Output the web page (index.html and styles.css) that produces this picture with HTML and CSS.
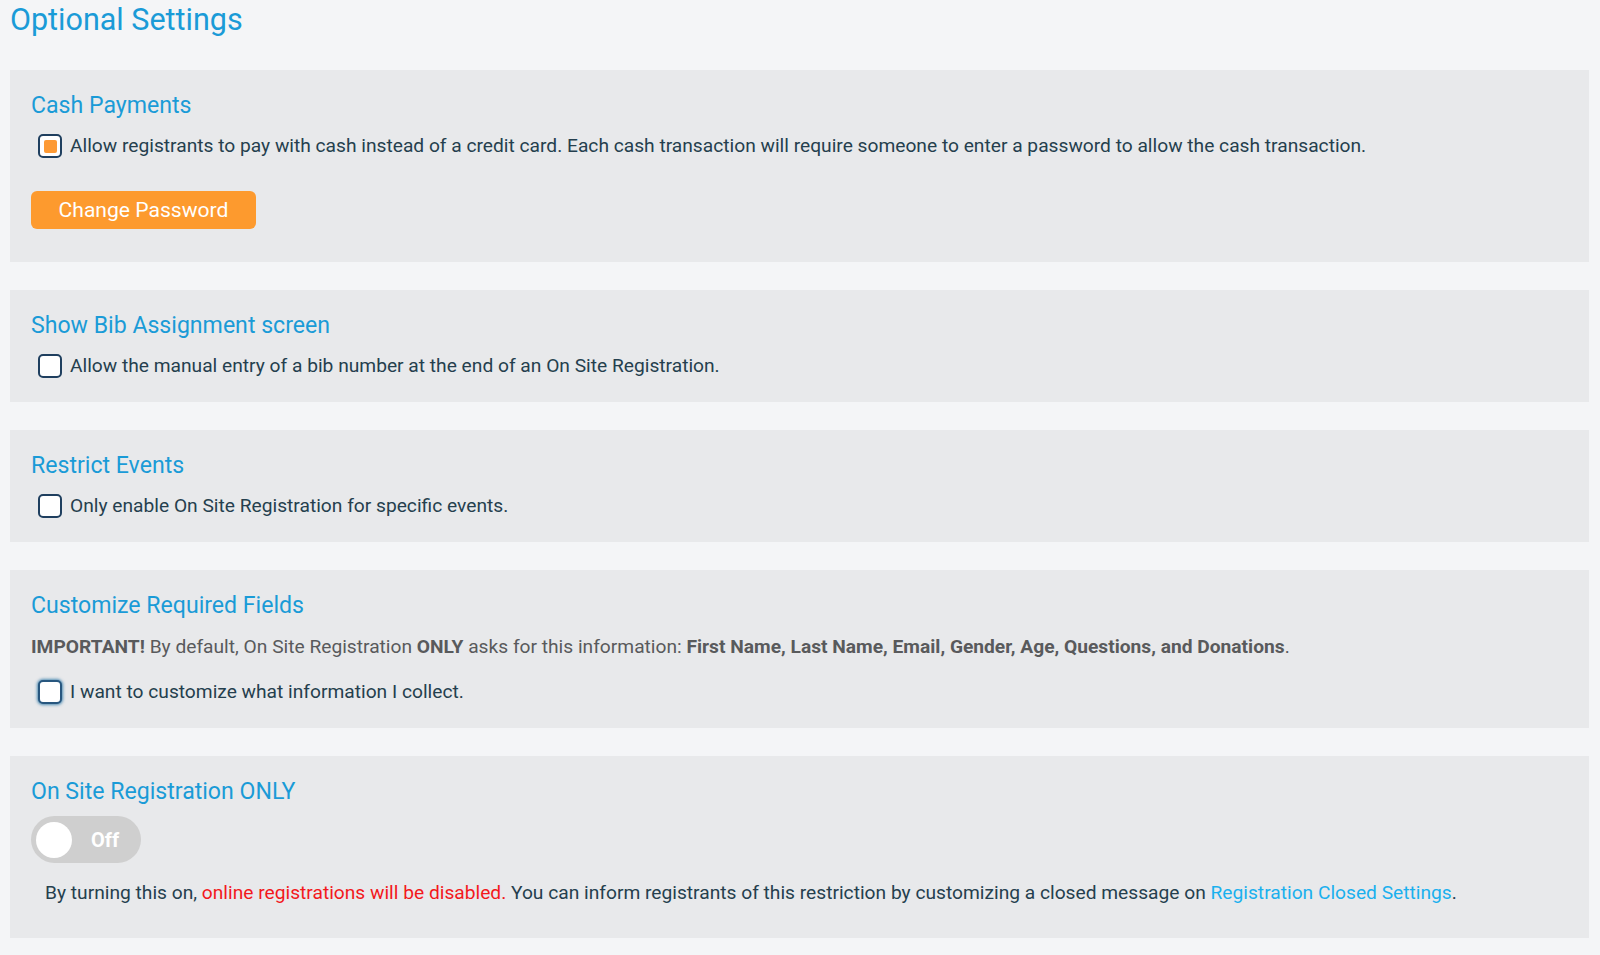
FILE: index.html
```html
<!DOCTYPE html>
<html lang="en">
<head>
<meta charset="utf-8">
<title>Optional Settings</title>
<link rel="stylesheet" href="styles.css">
</head>
<body>
<div class="page">
  <h1 class="page-title">Optional Settings</h1>

  <section class="card card-cash">
    <h2 class="card-title">Cash Payments</h2>
    <label class="check-row">
      <span class="checkbox checked"></span>
      <span class="check-text">Allow registrants to pay with cash instead of a credit card. Each cash transaction will require someone to enter a password to allow the cash transaction.</span>
    </label>
    <button class="btn-orange" type="button">Change Password</button>
  </section>

  <section class="card">
    <h2 class="card-title">Show Bib Assignment screen</h2>
    <label class="check-row">
      <span class="checkbox"></span>
      <span class="check-text">Allow the manual entry of a bib number at the end of an On Site Registration.</span>
    </label>
  </section>

  <section class="card">
    <h2 class="card-title">Restrict Events</h2>
    <label class="check-row">
      <span class="checkbox"></span>
      <span class="check-text">Only enable On Site Registration for specific events.</span>
    </label>
  </section>

  <section class="card">
    <h2 class="card-title">Customize Required Fields</h2>
    <p class="note"><b>IMPORTANT!</b> By default, On Site Registration <b>ONLY</b> asks for this information: <b>First Name, Last Name, Email, Gender, Age, Questions, and Donations</b>.</p>
    <label class="check-row check-row-spaced">
      <span class="checkbox focused"></span>
      <span class="check-text">I want to customize what information I collect.</span>
    </label>
  </section>

  <section class="card card-onsite">
    <h2 class="card-title">On Site Registration ONLY</h2>
    <div class="toggle">
      <span class="toggle-knob"></span>
      <span class="toggle-label">Off</span>
    </div>
    <p class="desc">By turning this on, <span class="warn">online registrations will be disabled.</span> You can inform registrants of this restriction by customizing a closed message on <a class="link" href="#">Registration Closed Settings</a>.</p>
  </section>
</div>
</body>
</html>
```

FILE: styles.css
```css
* { box-sizing: border-box; }

html, body {
  margin: 0;
  padding: 0;
  background: #f4f5f7;
}

body {
  font-family: Roboto, "Liberation Sans", Arial, sans-serif;
  color: #263d4b;
  height: 955px;
  overflow: hidden;
}

.page {
  padding: 2px 11px 0 10px;
  display: flex;
  flex-direction: column;
}

.page-title {
  margin: 0 0 32px 0;
  font-size: 30.5px;
  line-height: 36px;
  font-weight: 400;
  color: #1a9bd7;
}

.card {
  background: #e8e9eb;
  padding: 23px 22px 24px 21px;
  margin-bottom: 28px;
  display: flex;
  flex-direction: column;
  align-items: flex-start;
}

.card-title {
  margin: 0 0 15px 0;
  font-size: 23.1px;
  line-height: 26px;
  font-weight: 400;
  color: #1a9bd7;
}

.check-row {
  display: flex;
  align-items: center;
  gap: 8px;
  padding-left: 7px;
  height: 24px;
}

.check-row-spaced {
  margin-top: 20px;
}

.checkbox {
  flex: none;
  width: 24px;
  height: 24px;
  border: 2px solid #1f3f5f;
  border-radius: 5px;
  background: #ffffff;
  display: flex;
  align-items: center;
  justify-content: center;
}

.checkbox.checked::after {
  content: "";
  width: 13px;
  height: 13px;
  border-radius: 2px;
  background: #fd9a35;
}

.checkbox.focused {
  border-color: #28577f;
  box-shadow: 0 0 3px 1px rgba(30, 110, 160, 0.75);
}

.check-text {
  font-size: 19.2px;
  line-height: 24px;
  color: #253f4e;
  white-space: nowrap;
}

.btn-orange {
  margin-top: 33px;
  margin-bottom: 9px;
  width: 225px;
  height: 38px;
  border: none;
  border-radius: 6px;
  background: #fd9a2e;
  color: #ffffff;
  font-family: Roboto, "Liberation Sans", Arial, sans-serif;
  font-size: 21.1px;
  line-height: 38px;
  padding: 0;
  text-align: center;
}

.note {
  margin: -1px 0 0 0;
  font-size: 19.2px;
  line-height: 27px;
  color: #595a5c;
  white-space: nowrap;
}

.note b { font-weight: 700; }

.toggle {
  margin-top: -4px;
  width: 110px;
  height: 47px;
  border-radius: 24px;
  background: #cfcfcf;
  display: flex;
  align-items: center;
  padding-left: 5px;
}

.toggle-knob {
  width: 36px;
  height: 36px;
  border-radius: 50%;
  background: #ffffff;
}

.toggle-label {
  margin-left: 19px;
  color: #ffffff;
  font-size: 20px;
  font-weight: 700;
}

.card-onsite {
  padding-bottom: 32px;
}

.desc {
  margin: 16px 0 0 0;
  padding-left: 14px;
  font-size: 19.2px;
  line-height: 27px;
  color: #253f4e;
  white-space: nowrap;
}

.warn { color: #f3181c; }

.link {
  color: #1ab0ee;
  text-decoration: none;
}
```
